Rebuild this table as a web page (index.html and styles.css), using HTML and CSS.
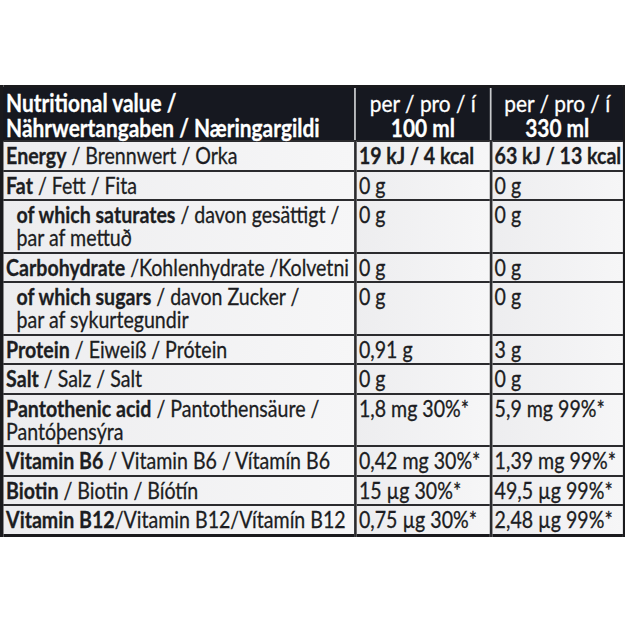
FILE: index.html
```html
<!DOCTYPE html>
<html>
<head>
<meta charset="utf-8">
<link rel="stylesheet" href="styles.css">
</head>
<body>
<div class="wrap">
<div class="squeeze">
<table class="nut">
  <colgroup><col class="c1"><col class="c2"><col class="c3"></colgroup>
  <thead>
    <tr>
      <th class="hname"><b>Nutritional value /<br>Nährwertangaben / Næringargildi</b></th>
      <th class="hval">per / pro / í<br><b>100 ml</b></th>
      <th class="hval">per / pro / í<br><b>330 ml</b></th>
    </tr>
  </thead>
  <tbody>
    <tr><td><b>Energy</b> / Brennwert / Orka</td><td><b>19 kJ / 4 kcal</b></td><td><b>63 kJ / 13 kcal</b></td></tr>
    <tr><td><b>Fat</b> / Fett / Fita</td><td>0 g</td><td>0 g</td></tr>
    <tr><td class="ind"><b>of which saturates</b> / davon gesättigt /<br>þar af mettuð</td><td>0 g</td><td>0 g</td></tr>
    <tr><td><b>Carbohydrate</b> /Kohlenhydrate /Kolvetni</td><td>0 g</td><td>0 g</td></tr>
    <tr><td class="ind"><b>of which sugars</b> / davon Zucker /<br>þar af sykurtegundir</td><td>0 g</td><td>0 g</td></tr>
    <tr><td><b>Protein</b> / Eiweiß / Prótein</td><td>0,91 g</td><td>3 g</td></tr>
    <tr><td><b>Salt</b> / Salz / Salt</td><td>0 g</td><td>0 g</td></tr>
    <tr><td><b>Pantothenic acid</b> / Pantothensäure /<br>Pantóþensýra</td><td>1,8 mg 30%*</td><td>5,9 mg 99%*</td></tr>
    <tr><td><b>Vitamin B6</b> / Vitamin B6 / Vítamín B6</td><td>0,42 mg 30%*</td><td>1,39 mg 99%*</td></tr>
    <tr><td><b>Biotin</b> / Biotin / Bíótín</td><td>15 µg 30%*</td><td>49,5 µg 99%*</td></tr>
    <tr><td><b>Vitamin B12</b>/Vitamin B12/Vítamín B12</td><td>0,75 µg 30%*</td><td>2,48 µg 99%*</td></tr>
  </tbody>
</table>
</div>
</div>
</body>
</html>
```
FILE: styles.css
```css
html, body {
  margin: 0;
  padding: 0;
  background: #ffffff;
  overflow: hidden;
}
.wrap {
  padding-top: 85px;
  width: 625px;
  overflow: hidden;
}
.squeeze {
  width: 716px;
  transform: scaleX(0.87);
  transform-origin: 0 0;
}
.nut {
  border-collapse: collapse;
  width: 716px;
  table-layout: fixed;
  font-family: "Lato", "Liberation Sans", sans-serif;
  font-size: 22.5px;
  line-height: 23px;
  color: #1c1d22;
  -webkit-text-stroke: 0.3px #1c1d22;
  border: 3px solid #1a1a1d;
  border-left-width: 4px;
  border-right-width: 4px;
}
.c1 { width: 406px; }
.c2 { width: 156px; }
.c3 { width: 154px; }
.nut th {
  background: #161820;
  color: #ffffff;
  -webkit-text-stroke: 0.3px #ffffff;
  font-weight: normal;
  font-size: 24px;
  line-height: 25px;
  padding: 2px 3px 0 3px;
  border-left: 2px solid #c9cacd;
  vertical-align: top;
}
.nut th:first-child { border-left: none; }
.nut th.hname { text-align: left; }
.nut th.hval { text-align: center; }
.nut td {
  background: linear-gradient(90deg, #ededef, #f6f6f7);
  padding: 2px 3px 2.5px 3px;
  border: 2px solid #2b2b2e;
  border-left-width: 3px;
  vertical-align: top;
  white-space: nowrap;
  overflow: hidden;
}
.nut td.ind { padding-left: 15px; }
.nut b { font-weight: bold; }
```
